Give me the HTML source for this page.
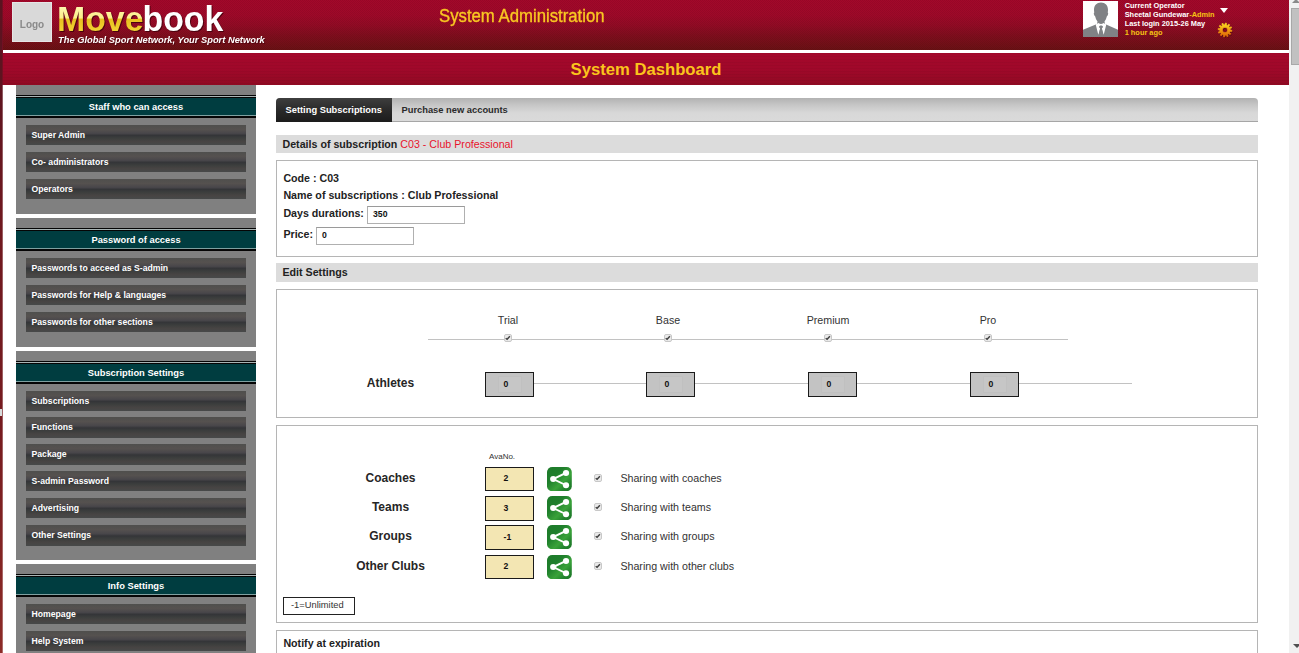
<!DOCTYPE html>
<html>
<head>
<meta charset="utf-8">
<title>System Dashboard</title>
<style>
*{box-sizing:border-box;margin:0;padding:0}
html,body{width:1299px;height:653px;overflow:hidden;background:#fff;font-family:"Liberation Sans",sans-serif;}
body{position:relative}
.abs{position:absolute}
#strip{left:0;top:0;width:3px;height:653px;background:linear-gradient(to bottom,#5a1320 0%,#5e1420 13%,#701920 35%,#761b1f 65%,#8c2b27 100%)}
#strip2{left:2px;top:85px;width:1px;height:568px;background:rgba(255,255,255,.3)}
#strip3{left:2px;top:0;width:1px;height:85px;background:rgba(163,8,42,.33)}
#hand{left:0;top:409px;width:2px;height:7px;background:#d8dcdc}
#hdr{left:3px;top:0;width:1286px;height:50px;background:linear-gradient(to bottom,#a3082a 0%,#9f0929 30%,#930b25 50%,#7f0e1d 72%,#6a1114 100%)}
#hdr:after{content:"";position:absolute;left:0;top:0;right:0;bottom:0;background-image:linear-gradient(45deg,rgba(0,0,0,.07) 25%,transparent 25%,transparent 75%,rgba(0,0,0,.07) 75%),linear-gradient(45deg,rgba(0,0,0,.07) 25%,transparent 25%,transparent 75%,rgba(0,0,0,.07) 75%);background-size:2px 2px;background-position:0 0,1px 1px}
#ban{left:3px;top:53px;width:1286px;height:32px;background:linear-gradient(to bottom,#a4082b 0%,#a0082a 50%,#900a22 100%)}
#ban:after{content:"";position:absolute;left:0;top:0;right:0;bottom:0;background-image:repeating-linear-gradient(to bottom,rgba(0,0,0,.04) 0 1px,rgba(0,0,0,0) 1px 3px)}
#bant{left:3px;top:59px;width:1286px;text-align:center;font-weight:bold;font-size:16.67px;line-height:22px;color:#fbc41c;z-index:2}
#sa{left:438.5px;top:5px;font-size:18px;line-height:22px;color:#f9c822;-webkit-text-stroke:.35px #f9c822;white-space:nowrap;transform-origin:0 0;transform:scaleX(.93);z-index:2}
#logobox{left:12px;top:2px;width:40px;height:40px;background:#d9d9d9;border:1px solid #e6e6e6;z-index:2;color:#8a8a8a;font-weight:bold;font-size:10px;line-height:43px;text-align:center;opacity:.999}
#mb{left:57px;top:-1.5px;font-size:35.5px;font-weight:bold;line-height:40px;white-space:nowrap;z-index:2;transform-origin:0 0;transform:scaleX(.953);filter:drop-shadow(1px 1px 0 rgba(60,0,10,.8))}
#mb .mv{background:linear-gradient(to bottom,#fffcc4 0%,#fbef8a 47%,#e8c020 51%,#f0d030 75%,#f8e660 100%);-webkit-background-clip:text;background-clip:text;color:transparent;}
#mb .mv2{color:transparent}
#mb .bk{color:#fff;margin-left:-1px}
#tag{left:58px;top:33.500px;font-size:9.6px;transform:scaleX(.972);line-height:12px;font-weight:bold;font-style:italic;color:#fff;white-space:nowrap;z-index:2;transform-origin:0 0;text-shadow:1px 1px 0 rgba(60,0,10,.6)}
#ava{left:1083px;top:1px;width:35px;height:36px;background:#fff;z-index:2;overflow:hidden}
#op{left:1124.7px;top:1px;font-size:7.4px;line-height:9px;font-weight:bold;color:#fff;white-space:nowrap;z-index:2}
#op span{color:#f6c313}
#tri{left:1219.6px;top:8px;width:0;height:0;border-left:4.7px solid transparent;border-right:4.7px solid transparent;border-top:5px solid #fff;z-index:2}
#gear{left:1214.5px;top:19.700px;width:20px;height:20px;z-index:2}
/* scrollbar */
#sb{left:1289px;top:0;width:10px;height:653px;background:#f1f1f1}
#sbth{left:1291px;top:8px;width:8px;height:57px;background:#c1c1c1;border:1px solid #a8a8a8;border-right:0}
#sbu{left:1292px;top:-1px;width:0;height:0;border-left:4px solid transparent;border-right:4px solid transparent;border-bottom:4px solid #8a8a8a}
#sbd{left:1293px;top:644px;width:0;height:0;border-left:4px solid transparent;border-right:4px solid transparent;border-top:4px solid #505050}
/* sidebar */
.sec{left:16px;width:240px;background:#808080}
.sh{left:0;width:240px;height:23px;top:10px;background:#050505}
.sh i{position:absolute;left:0;right:0;top:1px;height:1px;background:#a9b5b5}
.sh b{position:absolute;left:0;right:0;top:3px;height:17px;background:#003d40;border-bottom:1px solid #7fa0a0;height:18px;color:#fff;font-size:9.33px;line-height:19px;text-align:center;font-weight:bold}
.it{left:10px;width:220px;height:20px;color:#fff;font-weight:bold;font-size:8.67px;line-height:20px;padding-left:5.5px;white-space:nowrap;
background:linear-gradient(to bottom,#4f4f4d 0%,#55514f 22%,#48464a 42%,#343538 52%,#3c3e3d 66%,#474443 82%,#474949 100%)}

#tabs{left:276px;top:98px;width:982px;height:24px;border-radius:4px 4px 0 0;background:linear-gradient(to bottom,#b2b2b2 0%,#c6c6c6 30%,#d8d8d8 65%,#dadada 100%);border-bottom:1px solid #a6a6a6}
#tab1{left:276px;top:98px;width:116px;height:24px;border-radius:4px 0 0 0;background:linear-gradient(to bottom,#3e3e3e 0%,#2a2a2a 50%,#1c1c1c 100%);color:#fff;font-weight:bold;font-size:9.33px;line-height:25px;padding-left:9.5px;white-space:nowrap}
#tab2{left:401.5px;top:98px;height:24px;color:#2a2a2a;font-weight:bold;font-size:9.33px;line-height:25px;white-space:nowrap}
.bar{left:276px;width:982px;height:18px;background:#dcdcdc}
.pn{left:276px;width:982px;border:1px solid #b5b5b5;background:#fff}
.t{white-space:nowrap;line-height:1;color:#222}
.b{font-weight:bold}
.f11{font-size:10.67px}
.f12{font-size:12px}
.c{width:80px;text-align:center;color:#333}
.c2{left:330px;width:121px;text-align:center;color:#262626}
.inp{width:98px;height:18px;border:1px solid #b0b0b0;border-top-color:#9a9a9a;background:#fff;font-weight:bold;font-size:8.67px;line-height:15px;padding-left:5px;color:#111}
.hl{height:1px;background:#c2c2c2}
.cb{width:8px;height:8px;border:1px solid #c8c8c8;border-radius:2px;background:#eaeaea}
.cb svg{position:absolute;left:-1px;top:-1px;width:8px;height:8px}
.cb path{fill:none;stroke:#404040;stroke-width:1.4}
.gb{top:372px;width:49px;height:25px;border:1px solid #1a1a1a;background:#c3c3c3;font-weight:bold;font-size:8.67px;line-height:23px;color:#111;padding-left:17.600px}
.gb u{position:relative;text-decoration:none}
.gb i{position:absolute;left:12px;top:3px;width:24px;height:17px;background:#c6c6c6;border:1px solid #c0c0c0}
.yb{width:49px;border:1px solid #1a1a1a;background:#f3e6b3;font-weight:bold;font-size:8.67px;color:#111;padding-left:17.600px}
</style>
</head>
<body>
<div id="strip" class="abs"></div><div id="strip2" class="abs"></div><div id="strip3" class="abs"></div><div id="hand" class="abs"></div>
<div id="hdr" class="abs"></div>
<div id="ban" class="abs"></div>
<div id="bant" class="abs">System Dashboard</div>
<div id="sa" class="abs">System Administration</div>
<div id="logobox" class="abs">Logo</div>
<div id="mb" class="abs"><span class="mv">Move</span><span class="bk">book</span></div>
<div id="tag" class="abs">The Global Sport Network, Your Sport Network</div>
<div id="ava" class="abs"><svg width="35" height="36" viewBox="0 0 35 36"><path fill="#808285" d="M18 1.500c-4.300 0-7 3-7 7.200 0 1.100.1 1.900.3 2.700-.5.200-.6 1.100-.3 2.200.3 1 .7 1.500 1.100 1.600.5 2.100 1.300 3.900 2.400 5.300l-.5 2.600L0 28.800V36h35v-7.2l-13-5.7-.5-2.600c1.100-1.400 1.900-3.200 2.400-5.300.4-.1.800-.6 1.100-1.600.3-1.100.2-2-.3-2.200.2-.8.300-1.600.3-2.700 0-4.200-2.700-7.200-7-7.200z"/><path fill="#fff" d="M12.700 23.600l2.600 10.200 1.900-6.400-1-1.700.8-1.100h2l.8 1.100-1 1.700 1.900 6.400 2.600-10.200-2.800-1.700c-.8.600-1.700 1-2.500 1s-1.700-.4-2.500-1z"/><path fill="#808285" d="M16.700 25h2.600l.5.900-.9 1.500 1 5.100-1.900 3-1.900-3 1-5.100-.9-1.500z"/></svg></div>
<div id="op" class="abs">Current Operator<br>Sheetal Gundewar<span>-Admin</span><br>Last login 2015-26 May<br><span>1 hour ago</span></div>
<div id="tri" class="abs"></div>
<div id="gear" class="abs"><svg width="20" height="20" viewBox="0 0 20 20"><defs><linearGradient id="gg" x1="0" y1="0" x2="0" y2="1"><stop offset="0.12" stop-color="#f9d41e"/><stop offset=".5" stop-color="#f19c10"/><stop offset=".88" stop-color="#e27008"/></linearGradient></defs><path d="M9.96 4.70L10.35 3.01L11.59 3.18L11.50 4.92L12.62 5.39L13.80 4.12L14.78 4.89L13.84 6.35L14.57 7.32L16.23 6.81L16.70 7.97L15.15 8.75L15.30 9.96L16.99 10.35L16.82 11.59L15.08 11.50L14.61 12.62L15.88 13.80L15.11 14.78L13.65 13.84L12.68 14.57L13.19 16.23L12.03 16.70L11.25 15.15L10.04 15.30L9.65 16.99L8.41 16.82L8.50 15.08L7.38 14.61L6.20 15.88L5.22 15.11L6.16 13.65L5.43 12.68L3.77 13.19L3.30 12.03L4.85 11.25L4.70 10.04L3.01 9.65L3.18 8.41L4.92 8.50L5.39 7.38L4.12 6.20L4.89 5.22L6.35 6.16L7.32 5.43L6.81 3.77L7.97 3.30L8.75 4.85ZM10 7.4a2.6 2.6 0 1 0 0.01 0z" fill="rgba(50,0,0,.5)" fill-rule="evenodd" transform="translate(.8,1.1)"/><path d="M9.96 4.70L10.35 3.01L11.59 3.18L11.50 4.92L12.62 5.39L13.80 4.12L14.78 4.89L13.84 6.35L14.57 7.32L16.23 6.81L16.70 7.97L15.15 8.75L15.30 9.96L16.99 10.35L16.82 11.59L15.08 11.50L14.61 12.62L15.88 13.80L15.11 14.78L13.65 13.84L12.68 14.57L13.19 16.23L12.03 16.70L11.25 15.15L10.04 15.30L9.65 16.99L8.41 16.82L8.50 15.08L7.38 14.61L6.20 15.88L5.22 15.11L6.16 13.65L5.43 12.68L3.77 13.19L3.30 12.03L4.85 11.25L4.70 10.04L3.01 9.65L3.18 8.41L4.92 8.50L5.39 7.38L4.12 6.20L4.89 5.22L6.35 6.16L7.32 5.43L6.81 3.77L7.97 3.30L8.75 4.85ZM10 7.4a2.6 2.6 0 1 0 0.01 0z" fill="url(#gg)" fill-rule="evenodd" stroke="url(#gg)" stroke-width=".6" stroke-linejoin="round"/></svg></div>
<div id="sb" class="abs"></div><div id="sbth" class="abs"></div><div id="sbu" class="abs"></div><div id="sbd" class="abs"></div>

<!-- SIDEBAR -->
<div class="sec abs" style="top:85px;height:129px">
 <div class="sh abs"><i></i><b>Staff who can access</b></div>
 <div class="it abs" style="top:40px">Super Admin</div>
 <div class="it abs" style="top:67px">Co- administrators</div>
 <div class="it abs" style="top:94px">Operators</div>
</div>
<div class="sec abs" style="top:218px;height:129px">
 <div class="sh abs"><i></i><b>Password of access</b></div>
 <div class="it abs" style="top:40px">Passwords to acceed as S-admin</div>
 <div class="it abs" style="top:67px">Passwords for Help &amp; languages</div>
 <div class="it abs" style="top:94px">Passwords for other sections</div>
</div>
<div class="sec abs" style="top:351px;height:209px">
 <div class="sh abs"><i></i><b>Subscription Settings</b></div>
 <div class="it abs" style="top:40px">Subscriptions</div>
 <div class="it abs" style="top:66px;height:21px">Functions</div>
 <div class="it abs" style="top:93px;height:21px">Package</div>
 <div class="it abs" style="top:120px">S-admin Password</div>
 <div class="it abs" style="top:147px">Advertising</div>
 <div class="it abs" style="top:174px;height:21px">Other Settings</div>
</div>
<div class="sec abs" style="top:564px;height:100px">
 <div class="sh abs"><i></i><b>Info Settings</b></div>
 <div class="it abs" style="top:40px">Homepage</div>
 <div class="it abs" style="top:67px">Help System</div>
</div>


<!-- MAIN -->
<div id="tabs" class="abs"></div>
<div id="tab1" class="abs">Setting Subscriptions</div>
<div id="tab2" class="abs">Purchase new accounts</div>
<div class="bar abs" style="top:135px"></div>
<div class="t b f11 abs" style="left:282.5px;top:139px">Details of subscription <span style="font-weight:normal;color:#e8132b">C03 - Club Professional</span></div>
<div class="pn abs" style="top:160px;height:97px"></div>
<div class="t b f11 abs" style="left:283.4px;top:172.5px">Code : C03</div>
<div class="t b f11 abs" style="left:283.4px;top:189.9px">Name of subscriptions : Club Professional</div>
<div class="t b f11 abs" style="left:283.4px;top:207.9px">Days durations:</div>
<div class="inp abs" style="left:367px;top:206px">350</div>
<div class="t b f11 abs" style="left:283.4px;top:228.5px">Price:</div>
<div class="inp abs" style="left:316px;top:227px">0</div>
<div class="bar abs" style="top:263px;height:19px"></div>
<div class="t b f11 abs" style="left:282.5px;top:266.9px">Edit Settings</div>

<div class="pn abs" style="top:289px;height:129px"></div>
<div class="hl abs" style="left:428px;top:339px;width:640px"></div>
<div class="t f11 c abs" style="left:468px;top:314.9px">Trial</div>
<div class="t f11 c abs" style="left:628px;top:314.9px">Base</div>
<div class="t f11 c abs" style="left:788px;top:314.9px">Premium</div>
<div class="t f11 c abs" style="left:948px;top:314.9px">Pro</div>
<div class="cb abs" style="left:504px;top:334px"><svg viewBox="0 0 8 8"><path d="M1.7 4.2L3.1 5.3L5.9 2.2"/></svg></div>
<div class="cb abs" style="left:664px;top:334px"><svg viewBox="0 0 8 8"><path d="M1.7 4.2L3.1 5.3L5.9 2.2"/></svg></div>
<div class="cb abs" style="left:824px;top:334px"><svg viewBox="0 0 8 8"><path d="M1.7 4.2L3.1 5.3L5.9 2.2"/></svg></div>
<div class="cb abs" style="left:984px;top:334px"><svg viewBox="0 0 8 8"><path d="M1.7 4.2L3.1 5.3L5.9 2.2"/></svg></div>
<div class="hl abs" style="left:534px;top:383px;width:598px"></div>
<div class="t b f12 c2 abs" style="top:376.8px">Athletes</div>
<div class="gb abs" style="left:485px"><i></i><u>0</u></div>
<div class="gb abs" style="left:646px"><i></i><u>0</u></div>
<div class="gb abs" style="left:808px"><i></i><u>0</u></div>
<div class="gb abs" style="left:970px"><i></i><u>0</u></div>

<div class="pn abs" style="top:425px;height:198px"></div>
<div class="t abs" style="left:489px;top:453px;font-size:8px;color:#333">AvaNo.</div>
<div class="t b f12 c2 abs" style="top:471.8px">Coaches</div>
<div class="yb abs" style="left:485px;top:467px;height:24px;line-height:21px">2</div>
<div class="abs" style="left:547px;top:467px;width:25px;height:24px"><svg width="24.8" height="24.2" viewBox="0 0 24 24" preserveAspectRatio="none"><defs><linearGradient id="g0" x1="0" y1="0" x2="1" y2="1"><stop offset="0" stop-color="#1d7a2a"/><stop offset=".35" stop-color="#1f7f2c"/><stop offset=".62" stop-color="#3aa23a"/><stop offset=".8" stop-color="#23842d"/><stop offset="1" stop-color="#1c7627"/></linearGradient></defs><rect width="24" height="24" rx="5" fill="url(#g0)"/><path d="M18.400 5.900L6 12L18.400 18.100" fill="none" stroke="#fff" stroke-width="1.900"/><circle cx="6" cy="12" r="3" fill="#fff"/><circle cx="18.400" cy="5.900" r="3" fill="#fff"/><circle cx="18.400" cy="18.100" r="3" fill="#fff"/></svg></div>
<div class="cb abs" style="left:594px;top:474px"><svg viewBox="0 0 8 8"><path d="M1.7 4.2L3.1 5.3L5.9 2.2"/></svg></div>
<div class="t f11 abs" style="left:620.4px;top:473.4px;color:#333">Sharing with coaches</div>
<div class="t b f12 c2 abs" style="top:500.8px">Teams</div>
<div class="yb abs" style="left:485px;top:496px;height:25px;line-height:22px">3</div>
<div class="abs" style="left:547px;top:496px;width:25px;height:24px"><svg width="24.8" height="24.2" viewBox="0 0 24 24" preserveAspectRatio="none"><defs><linearGradient id="g1" x1="0" y1="0" x2="1" y2="1"><stop offset="0" stop-color="#1d7a2a"/><stop offset=".35" stop-color="#1f7f2c"/><stop offset=".62" stop-color="#3aa23a"/><stop offset=".8" stop-color="#23842d"/><stop offset="1" stop-color="#1c7627"/></linearGradient></defs><rect width="24" height="24" rx="5" fill="url(#g1)"/><path d="M18.400 5.900L6 12L18.400 18.100" fill="none" stroke="#fff" stroke-width="1.900"/><circle cx="6" cy="12" r="3" fill="#fff"/><circle cx="18.400" cy="5.900" r="3" fill="#fff"/><circle cx="18.400" cy="18.100" r="3" fill="#fff"/></svg></div>
<div class="cb abs" style="left:594px;top:503px"><svg viewBox="0 0 8 8"><path d="M1.7 4.2L3.1 5.3L5.9 2.2"/></svg></div>
<div class="t f11 abs" style="left:620.4px;top:502.4px;color:#333">Sharing with teams</div>
<div class="t b f12 c2 abs" style="top:529.8px">Groups</div>
<div class="yb abs" style="left:485px;top:525px;height:25px;line-height:22px">-1</div>
<div class="abs" style="left:547px;top:525px;width:25px;height:24px"><svg width="24.8" height="24.2" viewBox="0 0 24 24" preserveAspectRatio="none"><defs><linearGradient id="g2" x1="0" y1="0" x2="1" y2="1"><stop offset="0" stop-color="#1d7a2a"/><stop offset=".35" stop-color="#1f7f2c"/><stop offset=".62" stop-color="#3aa23a"/><stop offset=".8" stop-color="#23842d"/><stop offset="1" stop-color="#1c7627"/></linearGradient></defs><rect width="24" height="24" rx="5" fill="url(#g2)"/><path d="M18.400 5.900L6 12L18.400 18.100" fill="none" stroke="#fff" stroke-width="1.900"/><circle cx="6" cy="12" r="3" fill="#fff"/><circle cx="18.400" cy="5.900" r="3" fill="#fff"/><circle cx="18.400" cy="18.100" r="3" fill="#fff"/></svg></div>
<div class="cb abs" style="left:594px;top:532px"><svg viewBox="0 0 8 8"><path d="M1.7 4.2L3.1 5.3L5.9 2.2"/></svg></div>
<div class="t f11 abs" style="left:620.4px;top:531.4px;color:#333">Sharing with groups</div>
<div class="t b f12 c2 abs" style="top:559.8px">Other Clubs</div>
<div class="yb abs" style="left:485px;top:555px;height:24px;line-height:21px">2</div>
<div class="abs" style="left:547px;top:555px;width:25px;height:24px"><svg width="24.8" height="24.2" viewBox="0 0 24 24" preserveAspectRatio="none"><defs><linearGradient id="g3" x1="0" y1="0" x2="1" y2="1"><stop offset="0" stop-color="#1d7a2a"/><stop offset=".35" stop-color="#1f7f2c"/><stop offset=".62" stop-color="#3aa23a"/><stop offset=".8" stop-color="#23842d"/><stop offset="1" stop-color="#1c7627"/></linearGradient></defs><rect width="24" height="24" rx="5" fill="url(#g3)"/><path d="M18.400 5.900L6 12L18.400 18.100" fill="none" stroke="#fff" stroke-width="1.900"/><circle cx="6" cy="12" r="3" fill="#fff"/><circle cx="18.400" cy="5.900" r="3" fill="#fff"/><circle cx="18.400" cy="18.100" r="3" fill="#fff"/></svg></div>
<div class="cb abs" style="left:594px;top:562px"><svg viewBox="0 0 8 8"><path d="M1.7 4.2L3.1 5.3L5.9 2.2"/></svg></div>
<div class="t f11 abs" style="left:620.4px;top:561.4px;color:#333">Sharing with other clubs</div>
<div class="abs" style="left:283px;top:597px;width:72px;height:18px;border:1px solid #222;font-size:9.33px;line-height:14.5px;padding-left:7px;color:#333">-1=Unlimited</div>
<div class="pn abs" style="top:630px;height:60px"></div>
<div class="t b f11 abs" style="left:283.4px;top:638px">Notify at expiration</div>
</body>
</html>
